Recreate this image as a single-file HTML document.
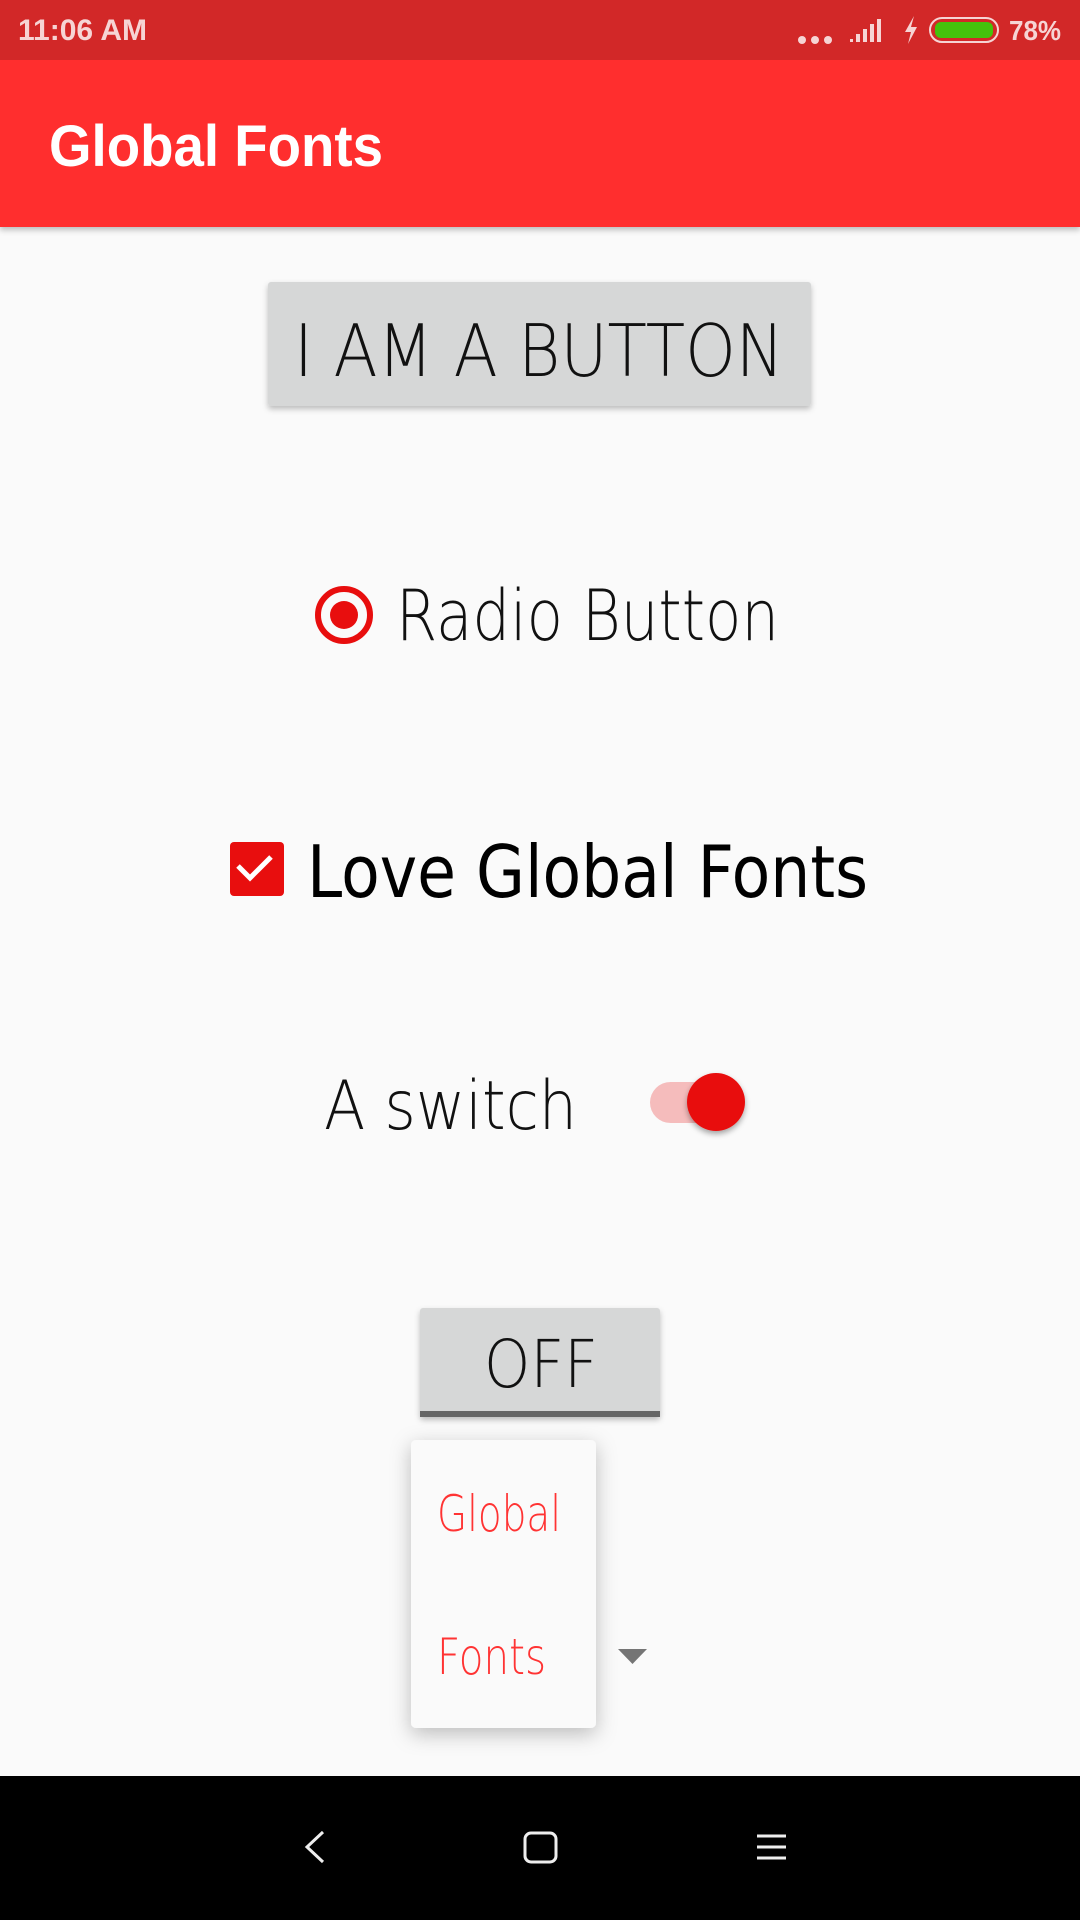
<!DOCTYPE html>
<html><head><meta charset="utf-8"><style>
html,body{margin:0;padding:0;width:1080px;height:1920px;overflow:hidden;background:#fafafa}
svg{display:block}
text{font-family:"Liberation Sans",sans-serif}
.thin{font-family:"DejaVu Sans ExtraLight","DejaVu Sans","Liberation Sans",sans-serif;font-weight:200}
.dv{font-family:"DejaVu Sans","Liberation Sans",sans-serif}
</style></head><body>
<svg width="1080" height="1920" viewBox="0 0 1080 1920" xmlns="http://www.w3.org/2000/svg">
<defs>
<filter id="sh" x="-30%" y="-30%" width="160%" height="170%"><feDropShadow dx="0" dy="6" stdDeviation="10" flood-color="#000" flood-opacity="0.25"/></filter>
<filter id="sh2" x="-10%" y="-10%" width="120%" height="140%"><feDropShadow dx="0" dy="3" stdDeviation="3" flood-color="#000" flood-opacity="0.25"/></filter>
<filter id="sh3" x="-30%" y="-30%" width="160%" height="160%"><feDropShadow dx="0" dy="3" stdDeviation="3" flood-color="#000" flood-opacity="0.35"/></filter>
</defs>
<rect width="1080" height="1920" fill="#fafafa"/>
<rect x="0" y="60" width="1080" height="167" fill="#ff2d2d" filter="url(#sh2)"/>
<rect x="0" y="0" width="1080" height="60" fill="#d22828"/>
<text x="18" y="40" font-size="30" font-weight="bold" fill="#f6d4d4" textLength="129" lengthAdjust="spacingAndGlyphs">11:06 AM</text>
<circle cx="802" cy="40" r="4" fill="#f6d4d4"/><circle cx="815" cy="40" r="4" fill="#f6d4d4"/><circle cx="828" cy="40" r="4" fill="#f6d4d4"/>
<path d="M850 42h3v-3h-3zM856 42h4v-8h-4zM863 42h4v-13h-4zM870 42h4v-18h-4zM877 42h4v-23h-4z" fill="#f6d4d4"/>
<path d="M914 16l-9 16h6l-3 12 9-17h-6z" fill="#f6d4d4"/>
<rect x="930" y="18" width="68" height="24" rx="12" fill="none" stroke="#f6d4d4" stroke-width="2"/>
<rect x="935" y="22" width="58" height="16" rx="6" fill="#44c20c"/>
<text x="1009" y="40" font-size="28" font-weight="bold" fill="#f6d4d4" textLength="52" lengthAdjust="spacingAndGlyphs">78%</text>
<text x="49" y="166" font-size="58" font-weight="bold" fill="#fff" textLength="334" lengthAdjust="spacingAndGlyphs">Global Fonts</text>
<rect x="268" y="282" width="543" height="124" rx="3" fill="#d6d7d7" filter="url(#sh2)"/>
<text class="thin" x="294" y="376" font-size="72" fill="#111" textLength="490" lengthAdjust="spacingAndGlyphs">I AM A BUTTON</text>
<circle cx="344" cy="615" r="26" fill="none" stroke="#e80e0e" stroke-width="6"/>
<circle cx="344" cy="615" r="14" fill="#e80e0e"/>
<text class="thin" x="396" y="640" font-size="70" fill="#111" textLength="383" lengthAdjust="spacingAndGlyphs">Radio Button</text>
<rect x="230" y="842" width="54" height="54" rx="4" fill="#e80e0e"/>
<path d="M238 866l12 12 21-21" fill="none" stroke="#fff" stroke-width="5"/>
<text class="dv" x="307" y="897" font-size="72" fill="#000" textLength="561" lengthAdjust="spacingAndGlyphs">Love Global Fonts</text>
<text class="thin" x="324" y="1129" font-size="68" fill="#111" textLength="253" lengthAdjust="spacingAndGlyphs">A switch</text>
<rect x="650" y="1082" width="72" height="41" rx="20.5" fill="#f5bcbc"/>
<circle cx="716" cy="1102" r="29" fill="#e80e0e" filter="url(#sh3)"/>
<rect x="420" y="1308" width="240" height="109" rx="3" fill="#d6d7d7" filter="url(#sh2)"/>
<rect x="420" y="1411" width="240" height="6" fill="#666"/>
<text class="thin" x="541" y="1387" font-size="66" fill="#111" text-anchor="middle" textLength="114" lengthAdjust="spacingAndGlyphs">OFF</text>
<path d="M618 1649h29l-14.5 15z" fill="#757575"/>
<rect x="411" y="1440" width="185" height="288" rx="5" fill="#fafafa" filter="url(#sh)"/>
<text class="thin" x="437" y="1531" font-size="50" fill="#f33" textLength="124" lengthAdjust="spacingAndGlyphs">Global</text>
<text class="thin" x="437" y="1674" font-size="50" fill="#f33" textLength="109" lengthAdjust="spacingAndGlyphs">Fonts</text>
<rect x="0" y="1776" width="1080" height="144" fill="#000"/>
<path d="M323 1832l-16 15 16 15" fill="none" stroke="#eee" stroke-width="3"/>
<rect x="525" y="1833" width="31" height="29" rx="6" fill="none" stroke="#eee" stroke-width="3"/>
<path d="M757 1836h29M757 1847h29M757 1858h29" stroke="#eee" stroke-width="3"/>
</svg>
</body></html>
